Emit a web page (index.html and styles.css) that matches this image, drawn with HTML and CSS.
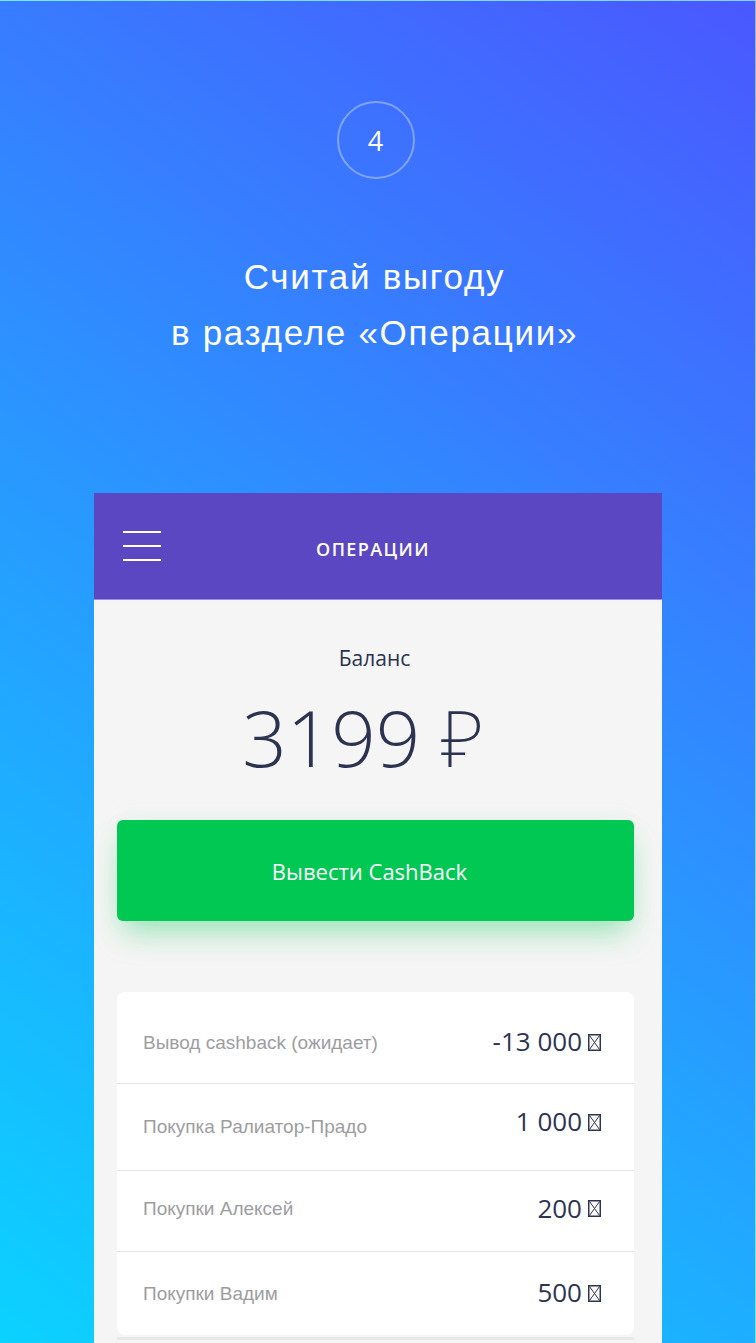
FILE: index.html
```html
<!DOCTYPE html>
<html lang="ru">
<head>
<meta charset="utf-8">
<title>Операции</title>
<link rel="stylesheet" href="styles.css">
</head>
<body>
<div class="page">
  <div class="step">4</div>
  <h1 class="headline">Считай выгоду<br>в разделе «Операции»</h1>
  <div class="phone">
    <header class="bar">
      <div class="burger"><span></span><span></span><span></span></div>
      <div class="bar-title">ОПЕРАЦИИ</div>
      <div></div>
    </header>
    <main class="screen">
      <div class="balance-label">Баланс</div>
      <div class="balance-value">3199 <span class="rub">₽</span></div>
      <button class="cta">Вывести CashBack</button>
      <ul class="ops">
        <li class="op op-1"><span class="op-name">Вывод cashback (ожидает)</span><span class="op-sum">-13 000 <svg class="tofu" viewBox="0 0 13 17"><rect x="0.75" y="0.75" width="11.5" height="15.5" fill="none" stroke="currentColor" stroke-width="1.5"/><path d="M1.5 1.5 L11.5 15.5 M11.5 1.5 L1.5 15.5" stroke="currentColor" stroke-width="1"/></svg></span></li>
        <li class="op op-2"><span class="op-name">Покупка Ралиатор-Прадо</span><span class="op-sum op-sum-up">1 000 <svg class="tofu" viewBox="0 0 13 17"><rect x="0.75" y="0.75" width="11.5" height="15.5" fill="none" stroke="currentColor" stroke-width="1.5"/><path d="M1.5 1.5 L11.5 15.5 M11.5 1.5 L1.5 15.5" stroke="currentColor" stroke-width="1"/></svg></span></li>
        <li class="op op-3"><span class="op-name">Покупки Алексей</span><span class="op-sum">200 <svg class="tofu" viewBox="0 0 13 17"><rect x="0.75" y="0.75" width="11.5" height="15.5" fill="none" stroke="currentColor" stroke-width="1.5"/><path d="M1.5 1.5 L11.5 15.5 M11.5 1.5 L1.5 15.5" stroke="currentColor" stroke-width="1"/></svg></span></li>
        <li class="op op-4"><span class="op-name">Покупки Вадим</span><span class="op-sum">500 <svg class="tofu" viewBox="0 0 13 17"><rect x="0.75" y="0.75" width="11.5" height="15.5" fill="none" stroke="currentColor" stroke-width="1.5"/><path d="M1.5 1.5 L11.5 15.5 M11.5 1.5 L1.5 15.5" stroke="currentColor" stroke-width="1"/></svg></span></li>
      </ul>
      <div class="ops-next"></div>
    </main>
  </div>
</div>
</body>
</html>
```
FILE: styles.css
```css
* { box-sizing: border-box; }
html, body { margin: 0; padding: 0; }
body { font-family: "Open Sans", "Liberation Sans", sans-serif; }

.page {
  width: 756px;
  height: 1343px;
  overflow: hidden;
  background: linear-gradient(216deg, #4a58ff 0%, #0bd2ff 100%);
  border-top: 1px solid rgba(255,255,255,0.45);
  border-right: 1px solid rgba(255,255,255,0.45);
  padding-top: 100px;
  display: flex;
  flex-direction: column;
  align-items: center;
}

.step {
  width: 78px;
  height: 78px;
  border-radius: 50%;
  border: 2px solid rgba(255,255,255,0.35);
  color: #fff;
  font-family: "Open Sans", sans-serif;
  font-size: 27px;
  font-weight: 400;
  display: flex;
  align-items: center;
  justify-content: center;
  margin-left: -4px;
}

.headline {
  margin: 70px 0 0;
  color: #fff;
  font-family: "Liberation Sans", Arial, sans-serif;
  font-weight: 400;
  font-size: 35px;
  line-height: 56px;
  letter-spacing: 1.7px;
  text-align: center;
  margin-left: -6px;
}

.phone {
  margin-top: 132px;
  width: 568px;
  flex: 1;
  align-self: flex-start;
  margin-left: 94px;
  background: #f5f5f5;
  display: flex;
  flex-direction: column;
}

.bar {
  height: 107px;
  background: #5b47c2;
  border-bottom: 1px solid #9a8de6;
  display: grid;
  grid-template-columns: 1fr auto 1fr;
  align-items: center;
  padding: 0 29px;
}
.burger { display: flex; flex-direction: column; gap: 12px; width: 38px; }
.burger span { display: block; height: 2px; background: #fff; }
.bar-title {
  color: #fff;
  font-size: 18px;
  letter-spacing: 1.4px;
  font-weight: 600;
  margin-left: -10px;
  margin-top: 5px;
}

.screen {
  flex: 1;
  display: flex;
  flex-direction: column;
  align-items: stretch;
  padding: 44px 28px 0 23px;
}

.balance-label {
  text-align: center;
  font-size: 21px;
  line-height: 28px;
  color: #2b3350;
  margin-left: -2px;
}
.balance-value {
  text-align: center;
  font-size: 78px;
  line-height: 90px;
  font-weight: 300;
  color: #2b3350;
  margin-top: 20px;
  margin-left: -24px;
}
.rub {
  font-family: "Noto Sans", "DejaVu Sans", sans-serif;
  font-weight: 200;
}

.cta {
  margin-top: 38px;
  height: 101px;
  border: 0;
  border-radius: 6px;
  background: #00c853;
  color: #fff;
  font-family: "Open Sans", sans-serif;
  font-size: 22px;
  padding: 0 12px 0 0;
  box-shadow: 0 18px 30px -6px rgba(0, 200, 83, 0.35), 0 0 24px rgba(0, 200, 83, 0.06);
}

.ops {
  list-style: none;
  margin: 71px 0 0;
  padding: 0;
  background: #fff;
  border-radius: 8px;
}
.op {
  display: flex;
  justify-content: space-between;
  align-items: center;
  padding: 0 33px 0 26px;
  border-top: 1px solid #e6e6e9;
}
.op-1 { height: 91px; border-top: 0; padding-top: 10px; }
.op-2 { height: 87px; padding-top: 0; }
.op-3 { height: 81px; padding-bottom: 4px; }
.op-4 { height: 84px; padding-top: 0; }
.op-name {
  font-family: "Liberation Sans", Arial, sans-serif;
  font-size: 19px;
  color: #9d9da1;
}
.op-sum {
  font-family: "Open Sans", sans-serif;
  font-size: 26px;
  font-weight: 400;
  color: #2e3452;
  display: flex;
  align-items: center;
  gap: 6px;
  margin-top: -3px;
}
.op-sum-up { margin-top: -12px; }
.tofu { width: 13px; height: 17px; color: #2e3452; margin-top: 2px; }

.ops-next {
  height: 3px;
  margin-top: 2px;
  background: #e9e9ea;
}
```
